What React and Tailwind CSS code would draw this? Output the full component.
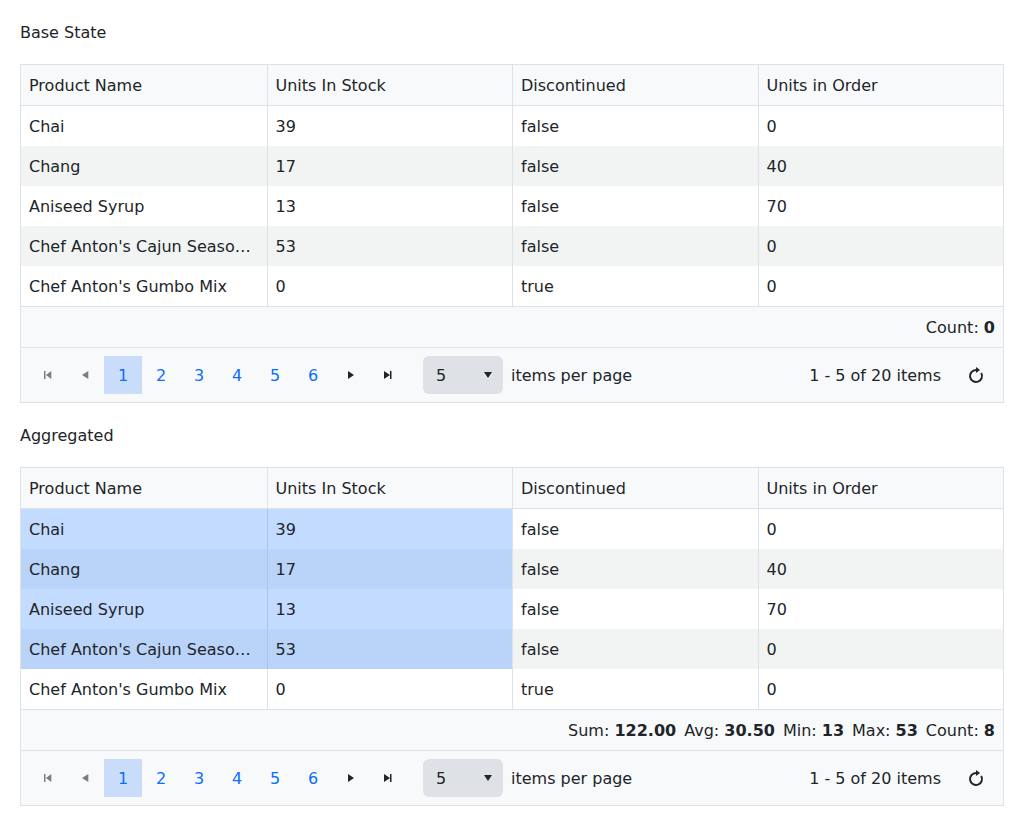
const columns = ["Product Name", "Units In Stock", "Discontinued", "Units in Order"];

const products = [
  ["Chai", "39", "false", "0"],
  ["Chang", "17", "false", "40"],
  ["Aniseed Syrup", "13", "false", "70"],
  ["Chef Anton's Cajun Seasoning", "53", "false", "0"],
  ["Chef Anton's Gumbo Mix", "0", "true", "0"],
];

const Icon = ({ d }) => (
  <svg width="16" height="16" viewBox="0 0 16 16" fill="currentColor">
    <path d={d} />
  </svg>
);

const Cell = ({ first, selected, index, children }) => {
  let bg = index % 2 === 1 ? "bg-[#f2f4f3]" : "bg-white";
  if (selected) bg = index % 2 === 1 ? "bg-[#b9d3f9]" : "bg-[#c3dbff]";
  return (
    <div
      className={`h-10 px-2 pt-[9px] pb-[7px] leading-6 truncate ${bg} ${
        first ? "" : selected ? "border-l border-[#abc4ea]" : "border-l border-[#dee2e6]"
      }`}
    >
      {children}
    </div>
  );
};

const Pager = () => (
  <div className="flex items-center h-[54px] pl-[7px] pr-2 bg-[#f8f9fa]">
    <button className="w-[38px] h-[38px] flex items-center justify-center text-[#7a7c7e]">
      <Icon d="M5 4h1.5v8H5zM12.3 4v8L7 8z" />
    </button>
    <button className="w-[38px] h-[38px] flex items-center justify-center text-[#7a7c7e]">
      <Icon d="M11.3 4v8L5 8z" />
    </button>
    {[1, 2, 3, 4, 5, 6].map((n) => (
      <button
        key={n}
        className={`w-[38px] h-[38px] pt-[2px] text-[#0d6efd] ${n === 1 ? "bg-[#c9ddfb]" : ""}`}
      >
        {n}
      </button>
    ))}
    <button className="w-[38px] h-[38px] flex items-center justify-center text-[#212529]">
      <Icon d="M5 4v8l6-4z" />
    </button>
    <button className="w-[38px] h-[38px] flex items-center justify-center text-[#212529]">
      <Icon d="M3 4v8l6-4zM9 4h1.5v8H9z" />
    </button>
    <div className="ml-[15px] w-20 h-[38px] pl-[13px] pr-[7px] flex items-center justify-between bg-[#dee2e6] rounded-md">
      <span className="pt-[2px]">5</span>
      <Icon d="M4 5h8l-4 6z" />
    </div>
    <span className="ml-2 pt-[2px]">items per page</span>
    <span className="ml-auto pt-[2px]">1 - 5 of 20 items</span>
    <button className="ml-4 w-[38px] h-[38px] flex items-center justify-center text-[#212529]">
      <svg width="16" height="18" viewBox="0 0 16 18" fill="none" stroke="currentColor" strokeWidth="2">
        <path d="M8 4A6 6 0 1 0 13.2 7" />
        <path d="M8 1v6l4-3z" fill="currentColor" stroke="none" />
      </svg>
    </button>
  </div>
);

const Grid = ({ selection, footer }) => (
  <div className="border border-[#dee2e6]">
    <div className="grid grid-cols-4 h-[41px] bg-[#f8f9fa] border-b border-[#dee2e6]">
      {columns.map((col, i) => (
        <div key={col} className={`px-2 pt-[9px] leading-6 ${i ? "border-l border-[#dee2e6]" : ""}`}>
          {col}
        </div>
      ))}
    </div>
    <div>
      {products.map((row, r) => (
        <div key={row[0]} className="grid grid-cols-4">
          {row.map((value, c) => (
            <Cell key={c} first={c === 0} index={r} selected={selection && r < 4 && c < 2}>
              {value}
            </Cell>
          ))}
        </div>
      ))}
    </div>
    <div className="flex justify-end gap-2 h-[42px] px-2 pt-[9px] leading-6 bg-[#f8f9fa] border-y border-[#dee2e6]">
      {footer.map(([label, value]) => (
        <span key={label}>
          {label}: <b>{value}</b>
        </span>
      ))}
    </div>
    <Pager />
  </div>
);

export default function App() {
  return (
    <div className="px-5 pb-5 text-base text-[#212529] font-['DejaVu_Sans',sans-serif]">
      <p className="pt-[21px] pb-[19px] leading-6">Base State</p>
      <Grid footer={[["Count", "0"]]} />
      <p className="pt-[21px] pb-[19px] leading-6">Aggregated</p>
      <Grid
        selection
        footer={[
          ["Sum", "122.00"],
          ["Avg", "30.50"],
          ["Min", "13"],
          ["Max", "53"],
          ["Count", "8"],
        ]}
      />
    </div>
  );
}
